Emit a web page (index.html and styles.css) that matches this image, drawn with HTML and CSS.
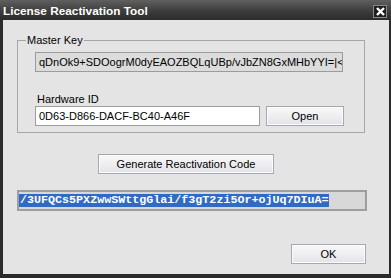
FILE: index.html
```html
<!DOCTYPE html>
<html lang="en">
<head>
  <meta charset="UTF-8" />
  <title>License Reactivation Tool</title>
  <link rel="stylesheet" href="styles.css">
</head>
<body>
  <div class="window">
    <div class="titlebar">
      <span class="title">License Reactivation Tool</span>
      <span class="close">
        <svg width="9" height="9" viewBox="0 0 9 9">
          <path d="M1 1 L8 8 M8 1 L1 8" stroke="#fff" stroke-width="2.4" />
        </svg>
      </span>
    </div>

    <div class="client">
      <fieldset class="group">
        <legend>Master Key</legend>
        <div class="field readonly">qDnOk9+SDOogrM0dyEAOZBQLqUBp/vJbZN8GxMHbYYI=|&lt;</div>

        <label class="label">Hardware ID</label>
        <div class="row">
          <div class="field edit">0D63-D866-DACF-BC40-A46F</div>
          <button class="btn open">Open</button>
        </div>
      </fieldset>

      <button class="btn generate">Generate Reactivation Code</button>

      <div class="code"><span class="sel">/3UFQCs5PXZwwSWttgGlai/f3gT2zi5Or+ojUq7DIuA=</span></div>

      <div class="footer">
        <button class="btn ok">OK</button>
      </div>
    </div>
  </div>
</body>
</html>
```

FILE: styles.css
```css
* {
  box-sizing: border-box;
}

body {
  margin: 0;
  background: #2b2b2b;
  font-family: 'Liberation Sans', Arial, sans-serif;
  font-size: 11px;
  color: #000;
}

/* Fenêtre */
.window {
  width: 391px;
  height: 278px;
  background: #2b2b2b;
  padding: 0 2px 4px 3px;
  display: flex;
  flex-direction: column;
}

.titlebar {
  height: 20px;
  margin: 0 -2px 0 -3px;
  padding: 0 4px 0 3px;
  background: linear-gradient(#606060, #3a3a3a 60%, #2c2c2c);
  display: flex;
  align-items: center;
  justify-content: space-between;
}

.title {
  color: #fff;
  font-weight: bold;
  font-size: 11.8px;
  padding-top: 1px;
}

.close {
  width: 14px;
  height: 13px;
  margin-top: 2px;
  background: #1e1e1e;
  border: 1px solid #8a8a8a;
  display: flex;
  align-items: center;
  justify-content: center;
}

.client {
  flex: 1;
  background: #e4e4e4;
  padding: 14px 0 0 14px;
  display: flex;
  flex-direction: column;
}

/* Groupe Master Key */
.group {
  width: 348px;
  height: 99px;
  margin: 0;
  padding: 5px 20px 0 17px;
  border: 1px solid #a6a6a6;
}

.group legend {
  padding: 0 1px;
  margin-left: -9px;
  line-height: 13px;
}

.field {
  height: 20px;
  border: 1px solid #9c9c9c;
  padding: 0 3px;
  line-height: 18px;
  white-space: nowrap;
  overflow: hidden;
}

.readonly {
  width: 308px;
  background: #dcdcdc;
}

.label {
  display: block;
  margin: 20px 0 0 2px;
  line-height: 14px;
}

.row {
  display: flex;
  gap: 6px;
}

.edit {
  width: 225px;
  background: #fff;
}

/* Boutons */
.btn {
  font-family: inherit;
  font-size: 11px;
  height: 20px;
  padding: 0;
  border: 1px solid #a3a9b4;
  background: linear-gradient(#f8f8f8, #efeff1 50%, #e2e2e8);
  box-shadow: inset 0 0 0 1px #fbfbfd;
  color: #000;
}

.open {
  width: 78px;
}

.generate {
  width: 176px;
  margin: 21px 0 0 81px;
}

/* Code généré */
.code {
  width: 350px;
  height: 21px;
  margin-top: 16px;
  border: 2px solid #9e9e9e;
  background: #d8d8d8;
  padding: 1px 0 0 0;
  white-space: nowrap;
  overflow: hidden;
}

.sel {
  display: inline-block;
  background: #316ac5;
  color: #fff;
  font-family: 'Liberation Mono', 'Courier New', monospace;
  font-weight: bold;
  font-size: 11.7px;
  line-height: 13px;
  padding: 0 0 0 1px;
}

.footer {
  display: flex;
  justify-content: flex-end;
  width: 349px;
  margin-top: 33px;
}

.ok {
  width: 75px;
}
```
